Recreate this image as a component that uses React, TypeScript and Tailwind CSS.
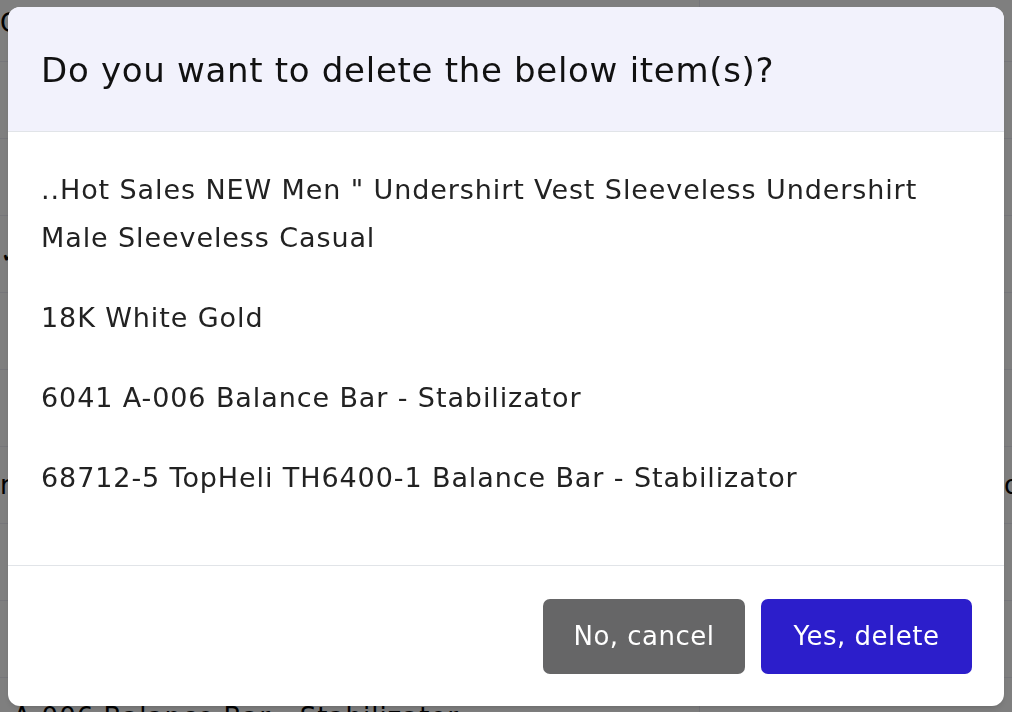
import React from "react";

const items = [
  '..Hot Sales NEW Men " Undershirt Vest Sleeveless Undershirt Male Sleeveless Casual',
  "18K White Gold",
  "6041 A-006 Balance Bar - Stabilizator",
  "68712-5 TopHeli TH6400-1 Balance Bar - Stabilizator",
];

// rows of the product table that sits behind the dialog
const bgRows = [
  { left: "Co", leftPad: "pl-[0px]", right: "", rightPad: "pl-[28px]" },
  { left: "", leftPad: "pl-[0px]", right: "", rightPad: "pl-[28px]" },
  { left: "", leftPad: "pl-[0px]", right: "", rightPad: "pl-[28px]" },
  { left: "✓", leftPad: "pl-[0px]", right: "", rightPad: "pl-[28px]" },
  { left: "", leftPad: "pl-[0px]", right: "", rightPad: "pl-[28px]" },
  { left: "", leftPad: "pl-[0px]", right: "", rightPad: "pl-[28px]" },
  { left: "r", leftPad: "pl-[0px]", right: "o", rightPad: "pl-[304px]" },
  { left: "", leftPad: "pl-[0px]", right: "", rightPad: "pl-[28px]" },
  { left: "", leftPad: "pl-[0px]", right: "", rightPad: "pl-[28px]" },
  { left: "A-006 Balance Bar - Stabilizator", leftPad: "pl-[13px]", right: "Extra rotor head 1 set", rightPad: "pl-[29px]" },
];

const App = () => {
  return (
    <div className="relative h-[712px] w-[1012px] overflow-hidden bg-white font-['DejaVu_Sans',sans-serif] text-black">
      {/* page behind the dialog */}
      <div className="-mt-[15px] flex flex-col">
        {bgRows.map((row, i) => (
          <div
            key={i}
            className="grid h-[77px] shrink-0 grid-cols-[700px_1fr] border-b border-[#ececf4] text-[26px] tracking-[1px]"
          >
            <div className={`flex items-center border-r border-[#ececf4] ${row.leftPad}`}>{row.left}</div>
            <div className={`flex items-center ${row.rightPad}`}>{row.right}</div>
          </div>
        ))}
      </div>

      {/* backdrop + dialog */}
      <div className="fixed inset-0 flex items-center justify-center bg-black/50">
        <div className="flex w-[996px] flex-col overflow-hidden rounded-[12px] bg-white shadow-md">
          <div className="flex h-[125px] items-center border-b border-[#e1e4e8] bg-[#f2f2fc] px-[33px] pt-[3px]">
            <h2 className="text-[34px] font-normal tracking-[0.7px] text-[#111]">
              Do you want to delete the below item(s)?
            </h2>
          </div>

          <div className="flex flex-col gap-8 px-[33px] pt-[34px] pb-[63px]">
            {items.map((item) => (
              <p key={item} className="text-[27px] leading-[48px] tracking-[0.9px] text-[#222]">
                {item}
              </p>
            ))}
          </div>

          <div className="flex justify-end gap-4 border-t border-[#e1e4e8] px-8 pt-[33px] pb-[32px]">
            <button className="h-[75px] w-[202px] rounded-[7px] bg-[#666667] text-[26px] tracking-[0.5px] text-white">
              No, cancel
            </button>
            <button className="h-[75px] w-[211px] rounded-[7px] bg-[#2c1ecb] text-[26px] tracking-[0.5px] text-white">
              Yes, delete
            </button>
          </div>
        </div>
      </div>
    </div>
  );
};

export default App;
